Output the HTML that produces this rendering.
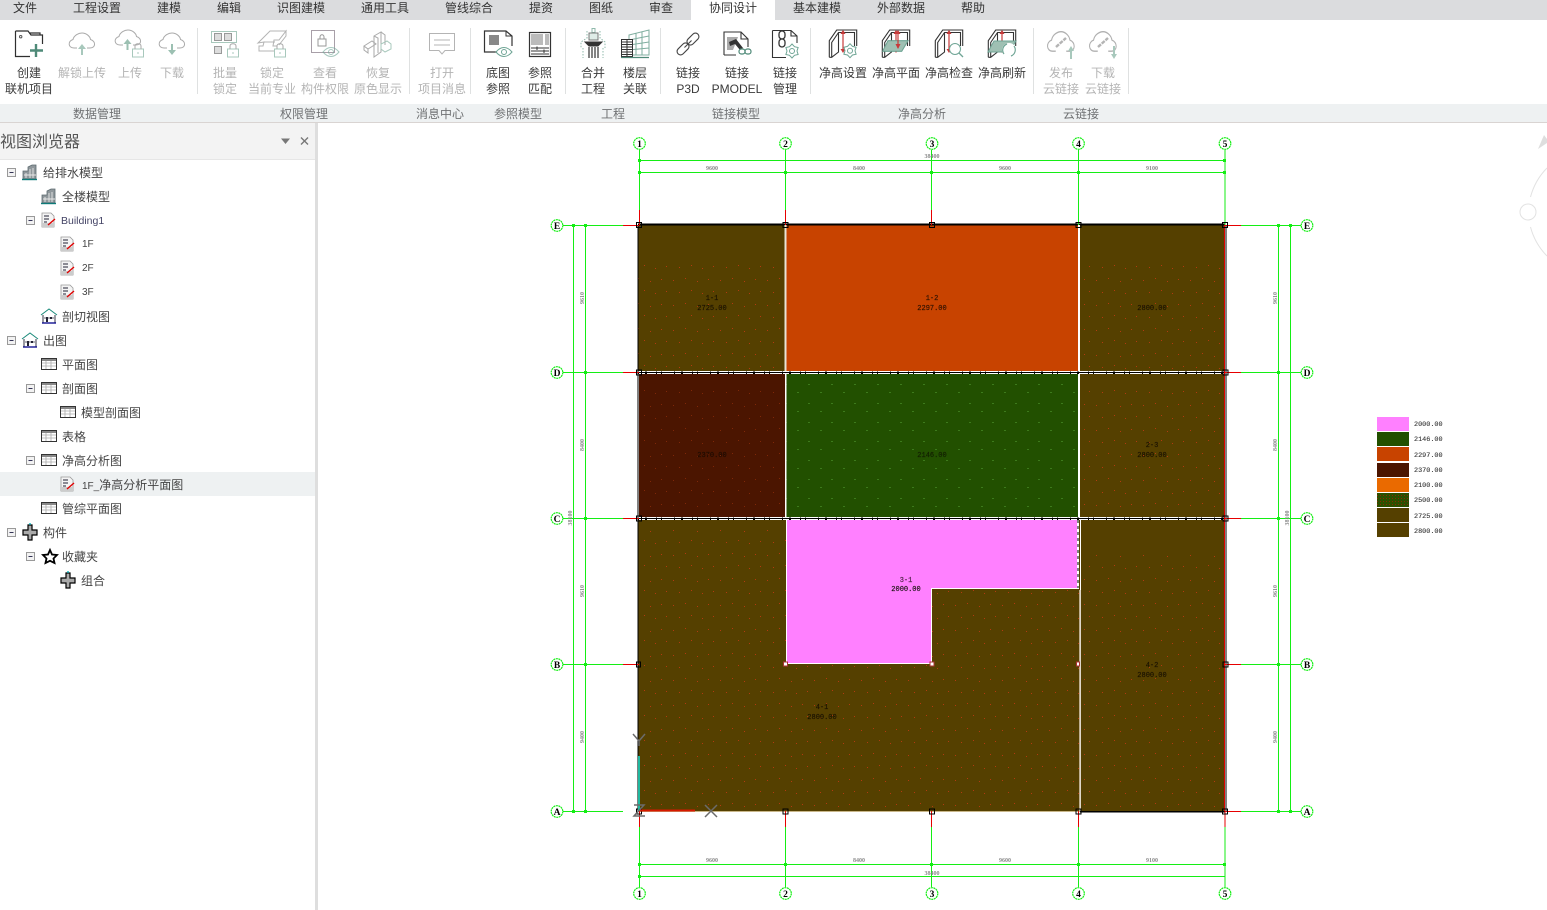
<!DOCTYPE html>
<html lang="zh"><head><meta charset="utf-8"><title>协同设计</title>
<style>
html,body{margin:0;padding:0;width:1547px;height:910px;overflow:hidden;background:#fff}
body{position:relative;font-family:"Liberation Sans","Noto Sans CJK SC",sans-serif;font-size:12px;color:#333}
.a{position:absolute;white-space:nowrap}
#menu{left:0;top:0;width:1547px;height:20px;background:#dbdcde}
#tab{left:691px;top:0;width:84px;height:20px;background:#fff}
.m{top:1px;line-height:15px;transform:translateX(-50%);color:#333}
#bar{left:0;top:104px;width:1547px;height:18px;background:#eef1f2}
#line{left:0;top:122px;width:1547px;height:1px;background:#d9d4d2}
.g{top:106px;line-height:16px;transform:translateX(-50%);color:#6f7173}
.r{transform:translateX(-50%);line-height:16px;top:64.5px;text-align:center;color:#3a3a3a}
.d{color:#b4b4b4}
.s{top:28px;width:1px;height:66px;background:#dfe1e1}
#ph{left:0;top:123px;width:315px;height:36px;background:#f3f3f3;border-bottom:1px solid #e6e6e6}
#pb{left:315px;top:123px;width:3px;height:787px;background:#dedede}
#sel{left:0;top:472px;width:315px;height:24px;background:#eef1f2}
.t{line-height:24px;height:24px;color:#444;margin-top:1px}
svg{position:absolute;left:0;top:0}
</style></head><body>
<svg width="1547" height="910" viewBox="0 0 1547 910" font-family="'Liberation Serif',serif">
<defs>
<pattern id="dots" width="47" height="25" patternUnits="userSpaceOnUse"><g fill="#b33a10"><rect x="3" y="4" width="1" height="1"/><rect x="15" y="5" width="1" height="1"/><rect x="27" y="3" width="1" height="1"/><rect x="39" y="6" width="1" height="1"/><rect x="8" y="16" width="1" height="1"/><rect x="21" y="17" width="1" height="1"/><rect x="33" y="15" width="1" height="1"/><rect x="44" y="18" width="1" height="1"/></g></pattern>
<pattern id="dotsg" width="23" height="19" patternUnits="userSpaceOnUse"><g fill="#3d7a1c"><rect x="3" y="4" width="2" height="1"/><rect x="15" y="12" width="2" height="1"/></g></pattern>
<pattern id="dm" width="3" height="3" patternUnits="userSpaceOnUse"><rect width="3" height="3" fill="#2c5000"/><rect width="1" height="1" fill="#8a2a00"/></pattern>
</defs>
<!-- rooms -->
<rect x="638" y="225" width="147" height="146" fill="#554000"/>
<rect x="786" y="225" width="292" height="146" fill="#c84300"/>
<rect x="1080" y="225" width="145" height="146" fill="#554000"/>
<rect x="639" y="374" width="146" height="143" fill="#4b1500"/>
<rect x="786" y="374" width="292" height="143" fill="#225000"/>
<rect x="1080" y="374" width="145" height="143" fill="#554000"/>
<rect x="638" y="518" width="442" height="293" fill="#554000"/>
<rect x="1081" y="520" width="144" height="291" fill="#554000"/>
<path d="M786 519H1079V589H932V664H786Z" fill="#fff"/>
<path d="M787 520H1077V588H931V663H787Z" fill="#ff80ff"/>
<rect x="638" y="265" width="147" height="106" fill="url(#dots)"/>
<rect x="1080" y="260" width="145" height="110" fill="url(#dots)"/>
<rect x="1081" y="555" width="144" height="255" fill="url(#dots)"/>
<rect x="1080" y="385" width="145" height="130" fill="url(#dots)"/>
<rect x="639" y="385" width="146" height="130" fill="url(#dots)" opacity=".5"/>
<rect x="786" y="375" width="292" height="142" fill="url(#dotsg)"/>
<path d="M639 530H786V664H932V590H1079V810H639Z" fill="url(#dots)"/>
<!-- walls -->
<g fill="none" shape-rendering="crispEdges">
<path d="M638 224.5H1225" stroke="#000" stroke-width="2"/>
<path d="M638 225V811" stroke="#000" stroke-width="1"/>
<path d="M785.5 225V371" stroke="#e9e4d6" stroke-width="2"/>
<path d="M1079 225V518" stroke="#fff" stroke-width="2"/>
<path d="M785.5 373V518" stroke="#fff" stroke-width="1.5"/>
<path d="M638 372.5H1226" stroke="#fff" stroke-width="3"/>
<path d="M638 518.5H1226" stroke="#fff" stroke-width="3"/>
<path d="M638 372.5H1226M638 518.5H1226" stroke="#000" stroke-width="1"/>
<path d="M638 372.5H1226M638 518.5H1226" stroke="#000" stroke-width="2.5" stroke-dasharray="1 6 2 9 1 4 1 12"/>
<path d="M1079.5 590V811" stroke="#bdae90" stroke-width="1.5"/>
<path d="M1078 520V588" stroke="#000" stroke-width="1" stroke-dasharray="3 3"/>
<path d="M638 811.5H1080" stroke="#c9b78a" stroke-width="1"/>
<path d="M1080 811.5H1225" stroke="#000" stroke-width="1.5"/>
<path d="M1226 225V811" stroke="#000" stroke-width="1"/>
<path d="M1224.5 225V811" stroke="#e00000" stroke-width="1"/>
</g>
<!-- axes -->
<g fill="none" stroke="#14ee14" stroke-width="1.2" shape-rendering="crispEdges">
<path d="M639.5 150V210M785.5 150V210M931.5 150V210M1078.5 150V225M1225 150V225"/>
<path d="M639.5 827V887M785.5 827V887M931.5 827V887M1078.5 811V887M1225 811V887"/>
<path d="M563 225.5H623M563 372.5H623M563 518.5H623M563 664.5H623M563 811.5H623"/>
<path d="M1241 225.5H1301M1241 372.5H1301M1241 518.5H1301M1241 664.5H1301M1241 811.5H1301"/>
<path d="M639 160.5H1225M639 172.5H1225M639 864.5H1225M639 876.5H1225"/>
<path d="M573.5 225V811M585.5 225V811M1278.5 225V811M1290.5 225V811"/>
</g>
<g fill="#14ee14">
<rect x="638" y="159" width="3" height="3"/><rect x="638" y="171" width="3" height="3"/><rect x="784" y="171" width="3" height="3"/><rect x="930" y="171" width="3" height="3"/><rect x="1077" y="171" width="3" height="3"/><rect x="1223" y="159" width="3" height="3"/><rect x="1223" y="171" width="3" height="3"/>
<rect x="638" y="863" width="3" height="3"/><rect x="784" y="863" width="3" height="3"/><rect x="930" y="863" width="3" height="3"/><rect x="1077" y="863" width="3" height="3"/><rect x="1223" y="863" width="3" height="3"/><rect x="638" y="875" width="3" height="3"/>
<rect x="572" y="224" width="3" height="3"/><rect x="584" y="224" width="3" height="3"/><rect x="572" y="810" width="3" height="3"/><rect x="584" y="810" width="3" height="3"/><rect x="584" y="371" width="3" height="3"/><rect x="584" y="517" width="3" height="3"/><rect x="584" y="663" width="3" height="3"/>
<rect x="1277" y="224" width="3" height="3"/><rect x="1277" y="371" width="3" height="3"/><rect x="1277" y="517" width="3" height="3"/><rect x="1277" y="663" width="3" height="3"/><rect x="1277" y="810" width="3" height="3"/><rect x="1289" y="224" width="3" height="3"/><rect x="1289" y="810" width="3" height="3"/>
</g>
<g fill="none" stroke="#e60000" stroke-width="1" shape-rendering="crispEdges">
<path d="M639.5 210V225M785.5 210V225M931.5 210V225M639.5 811V827M785.5 811V827M931.5 811V827M1078.5 811V827M1225 811V827"/>
<path d="M623 225.5H639M623 372.5H639M623 518.5H639M623 664.5H639"/>
<path d="M1225 225.5H1241M1225 372.5H1241M1225 518.5H1241M1225 664.5H1241M1225 811.5H1241"/>
</g>
<!-- markers -->
<g fill="none" stroke="#000" stroke-width="1" shape-rendering="crispEdges">
<rect x="636.5" y="222.5" width="5" height="5"/><rect x="783" y="222.5" width="5" height="5"/><rect x="929.5" y="222.5" width="5" height="5"/><rect x="1076" y="222.5" width="5" height="5"/><rect x="1222.5" y="222.5" width="5" height="5"/>
<rect x="636.5" y="370" width="5" height="5"/><rect x="1223" y="370" width="5" height="5"/><rect x="636.5" y="516" width="5" height="5"/><rect x="1223" y="516" width="5" height="5"/>
<rect x="1223" y="662" width="5" height="5"/><rect x="636.5" y="662" width="4" height="5"/>
<rect x="636.5" y="809" width="5" height="5"/><rect x="783" y="809" width="5" height="5"/><rect x="929.5" y="809" width="5" height="5"/><rect x="1076" y="809" width="5" height="5"/><rect x="1222.5" y="809" width="5" height="5"/>
</g>
<g fill="#fff" stroke="#a33" stroke-width="1" shape-rendering="crispEdges">
<rect x="783.5" y="662" width="4" height="4"/><rect x="930" y="662" width="4" height="4"/><rect x="1076.5" y="662" width="3" height="4"/>
</g>
<!-- bubbles -->
<g fill="#fff" stroke="#14ee14" stroke-width="1.2" stroke-dasharray="2 .6">
<circle cx="639.5" cy="143.5" r="5.8"/><circle cx="785.5" cy="143.5" r="5.8"/><circle cx="932" cy="143.5" r="5.8"/><circle cx="1078.5" cy="143.5" r="5.8"/><circle cx="1225" cy="143.5" r="5.8"/>
<circle cx="639.5" cy="893.5" r="5.8"/><circle cx="785.5" cy="893.5" r="5.8"/><circle cx="932" cy="893.5" r="5.8"/><circle cx="1078.5" cy="893.5" r="5.8"/><circle cx="1225" cy="893.5" r="5.8"/>
<circle cx="557" cy="225.5" r="5.8"/><circle cx="557" cy="372.5" r="5.8"/><circle cx="557" cy="518.5" r="5.8"/><circle cx="557" cy="664.5" r="5.8"/><circle cx="557" cy="811.5" r="5.8"/>
<circle cx="1307" cy="225.5" r="5.8"/><circle cx="1307" cy="372.5" r="5.8"/><circle cx="1307" cy="518.5" r="5.8"/><circle cx="1307" cy="664.5" r="5.8"/><circle cx="1307" cy="811.5" r="5.8"/>
</g>
<g font-size="9.5" font-weight="bold" fill="#000" text-anchor="middle">
<text x="639.5" y="147">1</text><text x="785.5" y="147">2</text><text x="932" y="147">3</text><text x="1078.5" y="147">4</text><text x="1225" y="147">5</text>
<text x="639.5" y="897">1</text><text x="785.5" y="897">2</text><text x="932" y="897">3</text><text x="1078.5" y="897">4</text><text x="1225" y="897">5</text>
<text x="557" y="229">E</text><text x="557" y="376">D</text><text x="557" y="522">C</text><text x="557" y="668">B</text><text x="557" y="815">A</text>
<text x="1307" y="229">E</text><text x="1307" y="376">D</text><text x="1307" y="522">C</text><text x="1307" y="668">B</text><text x="1307" y="815">A</text>
</g>
<!-- dim text -->
<g font-size="6" font-weight="bold" fill="#8a8a8a" text-anchor="middle">
<text x="932" y="158">38400</text><text x="712" y="170">9600</text><text x="859" y="170">8400</text><text x="1005" y="170">9600</text><text x="1152" y="170">9100</text>
<text x="712" y="862">9600</text><text x="859" y="862">8400</text><text x="1005" y="862">9600</text><text x="1152" y="862">9100</text><text x="932" y="875">38400</text>
<text transform="translate(584,298) rotate(-90)">9610</text><text transform="translate(584,445) rotate(-90)">8400</text><text transform="translate(584,591) rotate(-90)">9610</text><text transform="translate(584,737) rotate(-90)">9400</text><text transform="translate(572,518) rotate(-90)">38100</text>
<text transform="translate(1277,298) rotate(-90)">9610</text><text transform="translate(1277,445) rotate(-90)">8400</text><text transform="translate(1277,591) rotate(-90)">9610</text><text transform="translate(1277,737) rotate(-90)">9400</text><text transform="translate(1289,518) rotate(-90)">38100</text>
</g>
<!-- room text -->
<g font-size="7" fill="#1a1200" text-anchor="middle" font-family="'Liberation Mono',monospace" stroke="#1a1200" stroke-width=".15">
<text x="712" y="300">1-1</text><text x="712" y="310">2725.00</text>
<text x="932" y="300" fill="#3a1000">1-2</text><text x="932" y="310" fill="#3a1000">2297.00</text>
<text x="1152" y="310">2800.00</text>
<text x="712" y="457" fill="#200800">2370.00</text>
<text x="932" y="457" fill="#0d2800">2146.00</text>
<text x="1152" y="447">2-3</text><text x="1152" y="457">2800.00</text>
<text x="906" y="582" fill="#6a2a6a">3-1</text><text x="906" y="591" fill="#111">2000.00</text>
<text x="822" y="709">4-1</text><text x="822" y="719">2800.00</text>
<text x="1152" y="667">4-2</text><text x="1152" y="677">2800.00</text>
</g>
<!-- gizmo -->
<path d="M639 756V811" stroke="#20b8a0" stroke-width="2" fill="none"/>
<path d="M640 810.5H695" stroke="#d81800" stroke-width="2" fill="none"/>
<g fill="none" stroke="#6b6b6b" stroke-width="1.5">
<path d="M633 734L639 741L645 734M639 741V746"/>
<path d="M705 805L717 817M717 805L705 817"/>
<path d="M634 805H644L634 816H645"/>
</g>
<!-- legend -->
<rect x="1377" y="417" width="32" height="14" fill="#ff80ff"/>
<rect x="1377" y="432" width="32" height="14" fill="#225000"/>
<rect x="1377" y="447" width="32" height="14" fill="#c84300"/>
<rect x="1377" y="463" width="32" height="14" fill="#4b1500"/>
<rect x="1377" y="478" width="32" height="14" fill="#ea6a00"/>
<rect x="1377" y="493" width="32" height="14" fill="url(#dm)"/>
<rect x="1377" y="508" width="32" height="14" fill="#554000"/>
<rect x="1377" y="523" width="32" height="14" fill="#554000"/>
<g font-size="6.8" fill="#333" font-family="'Liberation Mono',monospace" stroke="#333" stroke-width=".1">
<text x="1414" y="426">2000.00</text><text x="1414" y="441">2146.00</text><text x="1414" y="457">2297.00</text><text x="1414" y="472">2370.00</text><text x="1414" y="487">2100.00</text><text x="1414" y="502">2500.00</text><text x="1414" y="518">2725.00</text><text x="1414" y="533">2800.00</text>
</g>
<!-- compass -->
<g fill="none" stroke="#e2e2e2" stroke-width="1">
<circle cx="1528" cy="212" r="8"/>
<path d="M1547 168A65 65 0 0 0 1530.5 197M1530.5 227A65 65 0 0 0 1547 256"/>
</g>
<path d="M1538 149L1544 135L1547 139V143Z" fill="#dedede"/>
</svg>

<div class="a" id="menu"></div><div class="a" id="tab"></div>
<div class="a m" style="left:25px">文件</div><div class="a m" style="left:97px">工程设置</div><div class="a m" style="left:169px">建模</div><div class="a m" style="left:229px">编辑</div><div class="a m" style="left:301px">识图建模</div><div class="a m" style="left:385px">通用工具</div><div class="a m" style="left:469px">管线综合</div><div class="a m" style="left:541px">提资</div><div class="a m" style="left:601px">图纸</div><div class="a m" style="left:661px">审查</div><div class="a m" style="left:733px">协同设计</div><div class="a m" style="left:817px">基本建模</div><div class="a m" style="left:901px">外部数据</div><div class="a m" style="left:973px">帮助</div>

<div class="a s" style="left:197px"></div><div class="a s" style="left:409px"></div><div class="a s" style="left:470px"></div><div class="a s" style="left:565px"></div><div class="a s" style="left:660px"></div><div class="a s" style="left:810px"></div><div class="a s" style="left:1033px"></div><div class="a s" style="left:1128px"></div>

<div class="a r" style="left:29px">创建<br>联机项目</div>
<div class="a r d" style="left:82px">解锁上传</div><div class="a r d" style="left:130px">上传</div><div class="a r d" style="left:172px">下载</div>
<div class="a r d" style="left:225px">批量<br>锁定</div><div class="a r d" style="left:272px">锁定<br>当前专业</div><div class="a r d" style="left:325px">查看<br>构件权限</div><div class="a r d" style="left:378px">恢复<br>原色显示</div>
<div class="a r d" style="left:442px">打开<br>项目消息</div>
<div class="a r" style="left:498px">底图<br>参照</div><div class="a r" style="left:540px">参照<br>匹配</div>
<div class="a r" style="left:593px">合并<br>工程</div><div class="a r" style="left:635px">楼层<br>关联</div>
<div class="a r" style="left:688px">链接<br>P3D</div><div class="a r" style="left:737px">链接<br>PMODEL</div><div class="a r" style="left:785px">链接<br>管理</div>
<div class="a r" style="left:843px">净高设置</div><div class="a r" style="left:896px">净高平面</div><div class="a r" style="left:949px">净高检查</div><div class="a r" style="left:1002px">净高刷新</div>
<div class="a r d" style="left:1061px">发布<br>云链接</div><div class="a r d" style="left:1103px">下载<br>云链接</div>

<div class="a" id="bar"></div><div class="a" id="line"></div>
<div class="a g" style="left:97px">数据管理</div><div class="a g" style="left:304px">权限管理</div><div class="a g" style="left:440px">消息中心</div><div class="a g" style="left:518px">参照模型</div><div class="a g" style="left:613px">工程</div><div class="a g" style="left:736px">链接模型</div><div class="a g" style="left:922px">净高分析</div><div class="a g" style="left:1081px">云链接</div>

<!-- ribbon icons -->
<svg width="1200" height="64" viewBox="0 0 1200 64" fill="none" stroke-width="1">
<defs>
<path id="cl" d="M-5 4H-8C-14 4-14.5-3-9-4.5C-8-9-3-11 0-11C4-11 8-8 8.5-4.5C14-3 14 4 8 4H5"/>
<g id="lk"><rect x="-5.5" y="-1" width="11" height="8" stroke="#a8c8bc" fill="#fff"/><path d="M-3-1V-4C-3-7 3-7 3-4V-1" stroke="#a8a8a8"/><path d="M0 2V4" stroke="#a8c8bc"/></g>
<g id="hb"><path d="M-13.7 13.3V-3.3L-6.3-14H13.7V2M-11.3 13.3V-1.5L-4.5-11.5H11.5V2M-13.7 13.3H-11.3L-4.5 8V-11.5" stroke="#333" stroke-width="1.1"/><path d="M0-13V7" stroke="#c83a3a" stroke-width="1.2"/><path d="M-2.5-10L0-14L2.5-10ZM-2.5 5L0 9L2.5 5Z" fill="#c83a3a" stroke="none"/></g>
<g id="ey"><path d="M-8 0C-3-6 3-6 8 0C3 6-3 6-8 0Z" stroke="#6fa595"/><circle r="2.5" stroke="#6fa595"/></g>
<g id="gr"><path d="M0-7L2.5-4.3L6.1-3.5L5 0L6.1 3.5L2.5 4.3L0 7L-2.5 4.3L-6.1 3.5L-5 0L-6.1-3.5L-2.5-4.3Z" stroke="#6fa595" fill="#fff"/><circle r="2.5" stroke="#6fa595"/></g>
</defs>
<path d="M15.5 31V56.5H30M15.5 31H28L31 35H42.5V44M29 33H40V35" stroke="#2f2f2f" stroke-width="1.2"/><circle cx="20.7" cy="36.7" r="1.2" stroke="#555"/>
<path d="M36 44V57M30 50.5H43" stroke="#4f8a78" stroke-width="2.4"/>
<use href="#cl" x="82" y="44" stroke="#aaa"/><path d="M82 55V47" stroke="#a8c8bc" stroke-width="2"/><path d="M78 49L82 44L86 49Z" fill="#a8c8bc"/>
<use href="#cl" x="128" y="41" stroke="#aaa"/><path d="M127.5 50V42" stroke="#9cc0b2" stroke-width="2"/><path d="M123.5 44L127.5 39L131.5 44Z" fill="#9cc0b2"/><use href="#lk" x="138" y="50"/>
<use href="#cl" x="172" y="44" stroke="#aaa"/><path d="M172 44V51" stroke="#9cc0b2" stroke-width="2"/><path d="M168 50L172 55L176 50Z" fill="#9cc0b2"/>
<rect x="211.5" y="31.5" width="25" height="11" stroke="#a8c8bc"/><rect x="214.5" y="33.5" width="7" height="7" fill="#ddd" stroke="#999"/><rect x="224.5" y="33.5" width="7" height="7" fill="#ddd" stroke="#999"/><rect x="214.5" y="46.5" width="7" height="7" fill="#ddd" stroke="#999"/><use href="#lk" x="233" y="50"/>
<path d="M258 43L270 31H286L279 40H274L273 46H277V51H259V46H263L264 42Z M264 42H275M279 40L286 31V36L279 45" stroke="#b4b4b4"/><use href="#lk" x="280" y="50"/>
<rect x="311.5" y="30.5" width="23" height="22" stroke="#a89fa8"/><rect x="318" y="39" width="8" height="7" stroke="#999"/><path d="M320 39V37C320 34 324 34 324 37V39" stroke="#999"/><use href="#ey" x="331" y="52" style="opacity:.6"/>
<path d="M374 36L381 32V52L374 57ZM381 32L385 35V45M374 36L378 38V53M364 46L372 41L376 44L368 49ZM364 46V50L368 53V49" stroke="#aaa"/><path d="M381 44L387 41L391 44V49L385 52L381 49Z" stroke="#a8c8bc"/>
<path d="M429.5 33.5H454.5V50.5H445L442 54L439 50.5H429.5Z" stroke="#b4b4b4"/><path d="M434 40H450M434 45H450" stroke="#b4b4b4"/>
<path d="M497 52H484.5V31H506L512 36V46" stroke="#333" stroke-width="1.2"/><path d="M506 31V36H512" stroke="#333"/><rect x="489" y="35" width="10" height="10" fill="#888" stroke="none"/><use href="#ey" x="504" y="52"/>
<rect x="529.5" y="32.5" width="21" height="24" stroke="#333" stroke-width="1.2"/><rect x="531" y="34" width="12" height="11" fill="#bbb" stroke="none"/><rect x="545" y="34" width="4" height="11" fill="#bbb" stroke="none"/><path d="M531 48H549M531 51H549M531 54H549" stroke="#333"/><path d="M537 46.5V50M544 49.5V53" stroke="#333"/>
<!-- 合并 -->
<rect x="592" y="28.5" width="3" height="4" stroke="#8fb9ab"/><rect x="589" y="33" width="9" height="7" fill="#dfece7" stroke="#777"/><path d="M585 42H602L598 46H589Z" fill="#333" stroke="#333"/><path d="M589 47V58M592 47V58M595 47V58M598 47V58" stroke="#333" stroke-width="1.2"/><path d="M587 31V38L581 42V48M600 31V38L605 42V48M583 48V58M603 48V58" stroke="#8fb9ab" stroke-dasharray="1.5 1.5"/>
<!-- 楼层 -->
<path d="M629 35L649 30V55H629ZM636 33.5V55M642 32V55M629 40L649 36M629 45L649 42M629 50L649 48" stroke="#7fae9f"/><rect x="621.5" y="39.5" width="11" height="17" fill="#fff" stroke="#333"/><path d="M622 42H632M622 44.5H632M622 47H632M622 49.5H632M622 52H632M622 54.5H632M627 40V56" stroke="#333"/><path d="M621 57.5H649" stroke="#4f8a78" stroke-width="1.2"/>
<!-- P3D -->
<g stroke="#444" transform="rotate(-45 688 44)"><rect x="674" y="40.5" width="14" height="7" rx="3.5" stroke-width="1.1"/><rect x="688" y="40.5" width="14" height="7" rx="3.5" stroke-width="1.1"/><path d="M683 44H693" stroke-width="1.1"/></g>
<!-- PMODEL -->
<path d="M724 55V32H741L748 39V47M741 32V39H748M724 55H736" stroke="#333" stroke-width="1.1"/><path d="M727 37L738 37L733 50H727Z" fill="#aaa" stroke="none"/><path d="M729 42L736 39L743 48L740 50L735 44L730 46Z" fill="#333" stroke="none"/><rect x="739" y="49" width="6" height="5" rx="2.4" stroke="#4f8a78" stroke-width="1.2"/><rect x="745" y="49" width="6" height="5" rx="2.4" stroke="#4f8a78" stroke-width="1.2"/>
<!-- 链接管理 -->
<path d="M772.5 30.5V57.5H786M772.5 30.5H791L797 36V43M791 30.5V36H797" stroke="#333" stroke-width="1.1"/><rect x="779" y="31" width="6" height="8" rx="3" stroke="#333" stroke-width="1.3"/><rect x="779" y="39" width="6" height="8" rx="3" stroke="#333" stroke-width="1.3"/><use href="#gr" x="792" y="51"/>
<!-- 净高 -->
<use href="#hb" x="843" y="44"/><use href="#gr" x="850" y="50.7"/>
<path d="M888 40.7H908L901.7 51.3H882.7Z" fill="#9fc0b3" stroke="#6fa595"/><use href="#hb" x="896" y="44"/><path d="M888 40.7H908L901.7 51.3H882.7Z" fill="#9fc0b3" stroke="#6fa595"/><path d="M898 31V48" stroke="#c83a3a" stroke-width="1.2"/><path d="M895.5 44L898 49L900.5 44ZM895.5 34L898 30L900.5 34Z" fill="#c83a3a"/>
<use href="#hb" x="949" y="44"/><circle cx="955" cy="49" r="5.5" stroke="#6fa595" fill="#fff"/><path d="M959 53L963 57" stroke="#6fa595" stroke-width="1.3"/>
<use href="#hb" x="1002" y="44"/><path d="M994 41H1016L1009 52H988Z" fill="#9fc0b3" stroke="#6fa595"/><circle cx="1009" cy="50" r="7" fill="#fff" stroke="none"/><path d="M1004 54A6.5 6.5 0 0 1 1007 44M1014 46A6.5 6.5 0 0 1 1011 56" stroke="#6fa595" stroke-width="1.2"/>
<!-- 云链接 -->
<use href="#cl" transform="translate(1061 46) scale(1.05 1.3)" stroke="#b0b0b0"/><path d="M1056 47L1066 38" stroke="#b4b4b4" stroke-width="2.4" stroke-dasharray="4 1"/><path d="M1071 59V49" stroke="#a8c8bc" stroke-width="2"/><path d="M1068 51L1071 46L1074 51Z" fill="#a8c8bc"/>
<use href="#cl" transform="translate(1103 46) scale(1.05 1.3)" stroke="#b0b0b0"/><path d="M1098 47L1108 38" stroke="#b4b4b4" stroke-width="2.4" stroke-dasharray="4 1"/><path d="M1114 46V55" stroke="#a8c8bc" stroke-width="2"/><path d="M1111 54L1114 59L1117 54Z" fill="#a8c8bc"/>
</svg>

<!-- browser panel -->
<div class="a" id="ph"></div><div class="a" id="pb"></div><div class="a" id="sel"></div>
<div class="a" style="left:0;top:131px;font-size:16px;line-height:22px;color:#555;margin-top:1px">视图浏览器</div>
<div class="a t" style="left:43px;top:160px">给排水模型</div>
<div class="a t" style="left:62px;top:184px">全楼模型</div>
<div class="a t" style="left:61px;top:208px;color:#446;font-size:10.5px">Building1</div>
<div class="a t" style="left:82px;top:232px;font-size:10px">1F</div>
<div class="a t" style="left:82px;top:256px;font-size:10px">2F</div>
<div class="a t" style="left:82px;top:280px;font-size:10px">3F</div>
<div class="a t" style="left:62px;top:304px">剖切视图</div>
<div class="a t" style="left:43px;top:328px">出图</div>
<div class="a t" style="left:62px;top:352px">平面图</div>
<div class="a t" style="left:62px;top:376px">剖面图</div>
<div class="a t" style="left:81px;top:400px">模型剖面图</div>
<div class="a t" style="left:62px;top:424px">表格</div>
<div class="a t" style="left:62px;top:448px">净高分析图</div>
<div class="a t" style="left:82px;top:472px"><span style="font-size:10px">1F_</span>净高分析平面图</div>
<div class="a t" style="left:62px;top:496px">管综平面图</div>
<div class="a t" style="left:43px;top:520px">构件</div>
<div class="a t" style="left:62px;top:544px">收藏夹</div>
<div class="a t" style="left:81px;top:568px">组合</div>
<svg width="320" height="600" viewBox="0 0 320 600" fill="none">
<defs>
<g id="ex"><rect x="-4" y="-4" width="8" height="8" fill="#f2f2f2" stroke="#999"/><path d="M-2 0H2" stroke="#335"/></g>
<g id="bd"><path d="M-7 7V-1L-2-1V-5L2-7H6V7Z" fill="#8f979b" stroke="#5d6b70" stroke-width=".8"/><path d="M-4 1V6M0-3V6M3-4V6M-6 3H6" stroke="#e8e8e8" stroke-width=".9"/><path d="M-8 7.5H7" stroke="#0d7a78" stroke-width="1.4"/></g>
<g id="dc"><path d="M-6-7H3L6-4V7H-6Z" fill="#f4f4f4" stroke="#999" stroke-width=".8"/><path d="M-6 3H6V7H-6Z" fill="#ccc"/><path d="M-4-4H1M-4-1H1M-4 2H-1" stroke="#223"/><path d="M0 5L7-1" stroke="#e00000" stroke-width="1.4"/></g>
<g id="hs"><path d="M-8-1L0-7L8-1" stroke="#1a8a7a"/><path d="M-6-1V7H6V-1" stroke="#223" stroke-width=".9"/><path d="M-7 7H7" stroke="#00008a" stroke-width="1.3"/><path d="M-3 1H-1V6H-3ZM1 1H3V3H1Z" fill="#223" stroke="none"/><path d="M-5 2H5" stroke="#223" stroke-width=".7"/></g>
<g id="tb"><rect x="-7.5" y="-5.5" width="15" height="11" fill="#fff" stroke="#333"/><rect x="-7" y="-5" width="14" height="2" fill="#888" stroke="none"/><path d="M-7-1H7M-7 2H7M-3-3V5M2-3V5" stroke="#aaa" stroke-width=".8"/></g>
<g id="cr"><path d="M-2-8H2V-3H7V2H2V7H-2V2H-7V-3H-2Z" fill="#aaa" stroke="#000" stroke-width="1.2"/><path d="M-1-9H1" stroke="#1fb8c0" stroke-width="1.5"/></g>
</defs>
<path d="M281 138.5H290L285.5 144Z" fill="#777"/>
<path d="M301 137.5L308 144.5M308 137.5L301 144.5" stroke="#777" stroke-width="1.4"/>
<use href="#ex" x="11.5" y="172.5"/><use href="#ex" x="30.5" y="220.5"/><use href="#ex" x="11.5" y="340.5"/><use href="#ex" x="30.5" y="388.5"/><use href="#ex" x="30.5" y="460.5"/><use href="#ex" x="11.5" y="532.5"/><use href="#ex" x="30.5" y="556.5"/>
<use href="#bd" x="30" y="172"/><use href="#bd" x="49" y="196"/>
<use href="#dc" x="48" y="220"/><use href="#dc" x="67" y="244"/><use href="#dc" x="67" y="268"/><use href="#dc" x="67" y="292"/><use href="#dc" x="67" y="484"/>
<use href="#hs" x="49" y="316"/><use href="#hs" x="30" y="340"/>
<use href="#tb" x="49" y="364"/><use href="#tb" x="49" y="388"/><use href="#tb" x="68" y="412"/><use href="#tb" x="49" y="436"/><use href="#tb" x="49" y="460"/><use href="#tb" x="49" y="508"/>
<use href="#cr" x="30" y="533"/><use href="#cr" x="68" y="581"/>
<path d="M50 550L52 554.5L57 555L53.5 558.5L54.5 563L50 560.8L45.5 563L46.5 558.5L43 555L48 554.5Z" stroke="#000" stroke-width="1.8" fill="#fff"/>
</svg>
</body></html>
